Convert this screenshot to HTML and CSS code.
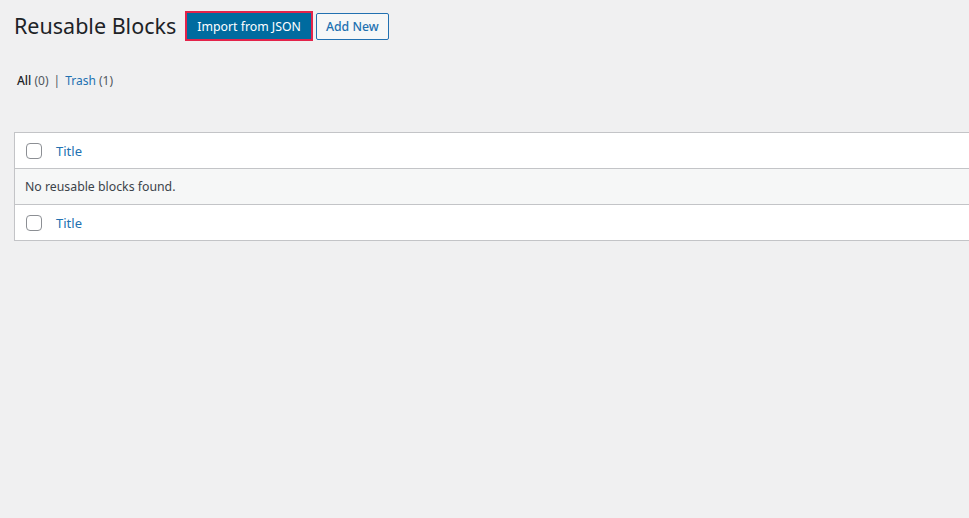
FILE: index.html
```html
<!DOCTYPE html>
<html>
<head>
<meta charset="utf-8">
<link rel="stylesheet" href="styles.css">
</head>
<body>
<div class="wrap">
  <div class="heading">
    <h1 class="title">Reusable Blocks</h1>
    <a class="btn btn-import">Import from JSON</a>
    <a class="btn btn-add">Add New</a>
  </div>
  <ul class="subsub">
    <li class="current">All <span class="count">(0)</span></li>
    <li class="sep">|</li>
    <li><a class="link">Trash</a> <span class="count">(1)</span></li>
  </ul>
  <div class="table">
    <div class="row row-head">
      <span class="cb"></span>
      <a class="col-title">Title</a>
    </div>
    <div class="row row-empty">No reusable blocks found.</div>
    <div class="row row-foot">
      <span class="cb"></span>
      <a class="col-title">Title</a>
    </div>
  </div>
</div>
</body>
</html>
```

FILE: styles.css
```css
html, body {
  margin: 0;
  padding: 0;
  background: #f0f0f1;
  font-family: "Noto Sans", "Open Sans", sans-serif;
  color: #3c434a;
  font-size: 12.3px;
}
.wrap {
  padding: 0 0 0 14px;
}
.heading {
  display: flex;
  align-items: center;
  padding-top: 11px;
  height: 30px;
}
.title {
  margin: 0 9px 0 0;
  font-size: 21.5px;
  font-weight: 400;
  color: #1d2327;
  line-height: 30px;
}
.btn {
  display: inline-flex;
  align-items: center;
  box-sizing: border-box;
  font-size: 12.3px;
  text-decoration: none;
  border-radius: 2px;
}
.btn-import {
  height: 30px;
  padding: 0 10px;
  background: #006b9f;
  color: #fff;
  border: 2px solid #e3234a;
  border-radius: 0;
}
.btn-add {
  margin-left: 3px;
  height: 27px;
  padding: 0 9px;
  background: #f6f7f7;
  color: #2271b1;
  border: 1px solid #2271b1;
  font-weight: 500;
}
.subsub {
  list-style: none;
  display: flex;
  gap: 5px;
  margin: 0;
  padding: 31px 0 0 3px;
  height: 18px;
  line-height: 18px;
  font-size: 12px;
}
.subsub .current {
  color: #1d2327;
  font-weight: 500;
}
.count {
  color: #50575e;
  font-weight: 400;
}
.link {
  color: #2271b1;
}
.sep {
  color: #50575e;
}
.table {
  margin-top: 42px;
  background: #fff;
  border: 1px solid #c3c4c7;
  border-right: none;
  box-shadow: 0 1px 1px rgba(0,0,0,0.04);
}
.row {
  height: 35px;
  display: flex;
  align-items: center;
  box-sizing: border-box;
}
.row-head {
  height: 36px;
  border-bottom: 1px solid #c3c4c7;
}
.row-empty {
  height: 36px;
  background: #f6f7f7;
  border-bottom: 1px solid #c3c4c7;
  padding-left: 10px;
  color: #3c434a;
}
.cb {
  width: 16px;
  height: 16px;
  box-sizing: border-box;
  border: 1px solid #8c8f94;
  border-radius: 4px;
  background: #fff;
  margin-left: 11px;
  margin-right: 14px;
}
.col-title {
  color: #2271b1;
  font-size: 13px;
}
```
